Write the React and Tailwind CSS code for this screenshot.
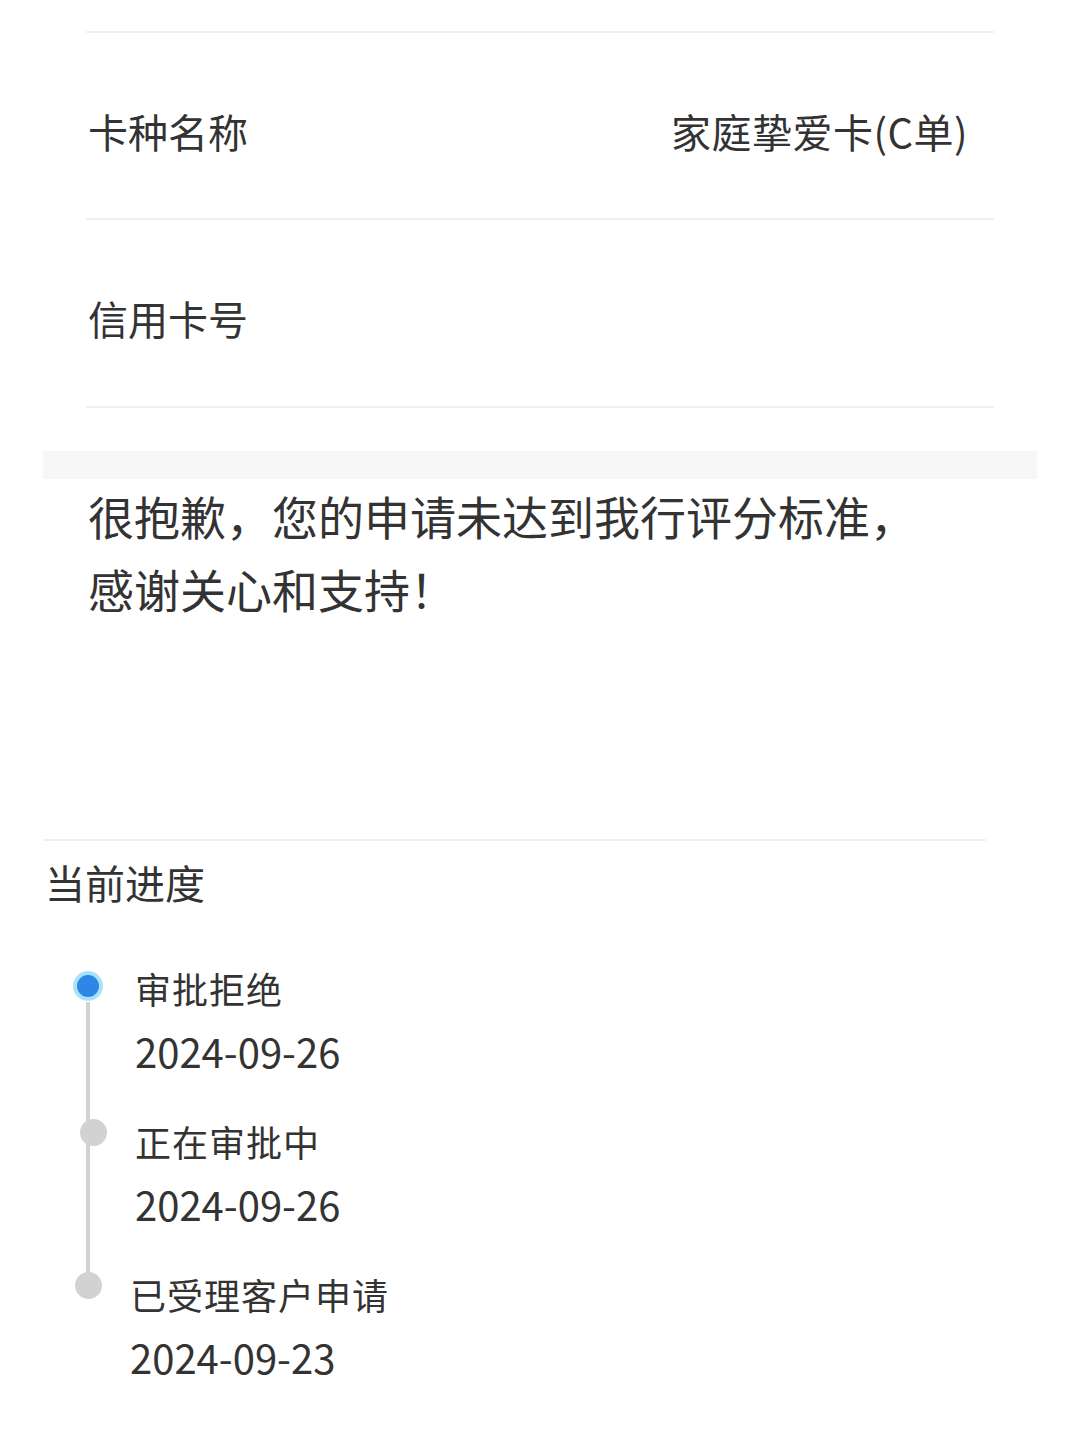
import React from "react";

const font = { fontFamily: '"Noto Sans CJK SC", "Noto Sans", sans-serif' };

const steps = [
  { title: "审批拒绝", date: "2024-09-26", active: true, dotX: "left-[30px]", dotY: "top-[14px]", textPl: "pl-[92px]" },
  { title: "正在审批中", date: "2024-09-26", active: false, dotX: "left-[37px]", dotY: "top-[9px]", textPl: "pl-[92px]" },
  { title: "已受理客户申请", date: "2024-09-23", active: false, dotX: "left-[32px]", dotY: "top-[9px]", textPl: "pl-[87px]" },
];

export default function App() {
  return (
    <div className="w-[1080px] min-h-[1446px] bg-white text-[#333333]" style={font}>
      <div className="px-[86px] pt-[31px]">
        <div className="border-t-2 border-[#efefef]" />
        <div className="h-[185px] flex items-center justify-between pl-[2px] pr-[26px] pt-[10px]">
          <span className="text-[40px] leading-none">卡种名称</span>
          <span className="text-[40px] leading-none tracking-[0.5px]">家庭挚爱卡(C单)</span>
        </div>
        <div className="border-t-2 border-[#efefef]" />
        <div className="h-[186px] flex items-center pl-[2px] pt-[10px]">
          <span className="text-[40px] leading-none">信用卡号</span>
        </div>
        <div className="border-t-2 border-[#efefef]" />
      </div>

      <div className="mt-[43px] mx-[43px] h-[28px] bg-[#f7f7f7]" />

      <div className="pl-[88px] text-[46px] leading-[73px]">
        <p>很抱歉，您的申请未达到我行评分标准，</p>
        <p>感谢关心和支持！</p>
      </div>

      <div className="mt-[214px] ml-[43px] mr-[94px] border-t-2 border-[#efefef]" />

      <div className="pl-[45px] text-[40px] leading-[82px]">当前进度</div>

      <div className="relative mt-[34px] ml-[43px]">
        <div className="absolute left-[43px] top-[45px] w-[4px] h-[290px] bg-[#d2d2d2]" />
        <div className="flex flex-col gap-[27px]">
          {steps.map((s, i) => (
            <div key={i} className={"relative " + s.textPl}>
              {s.active ? (
                <div className={"absolute " + s.dotX + " " + s.dotY + " w-[30px] h-[30px] rounded-full bg-[#a9e3fb] flex items-center justify-center"}>
                  <div className="w-[22px] h-[22px] rounded-full bg-[#2f86e4]" />
                </div>
              ) : (
                <div className={"absolute " + s.dotX + " " + s.dotY + " w-[27px] h-[27px] rounded-full bg-[#d2d2d2]"} />
              )}
              <div className="text-[36px] leading-[63px] tracking-[1px]">{s.title}</div>
              <div className="text-[40px] leading-[63px]">{s.date}</div>
            </div>
          ))}
        </div>
      </div>
    </div>
  );
}
